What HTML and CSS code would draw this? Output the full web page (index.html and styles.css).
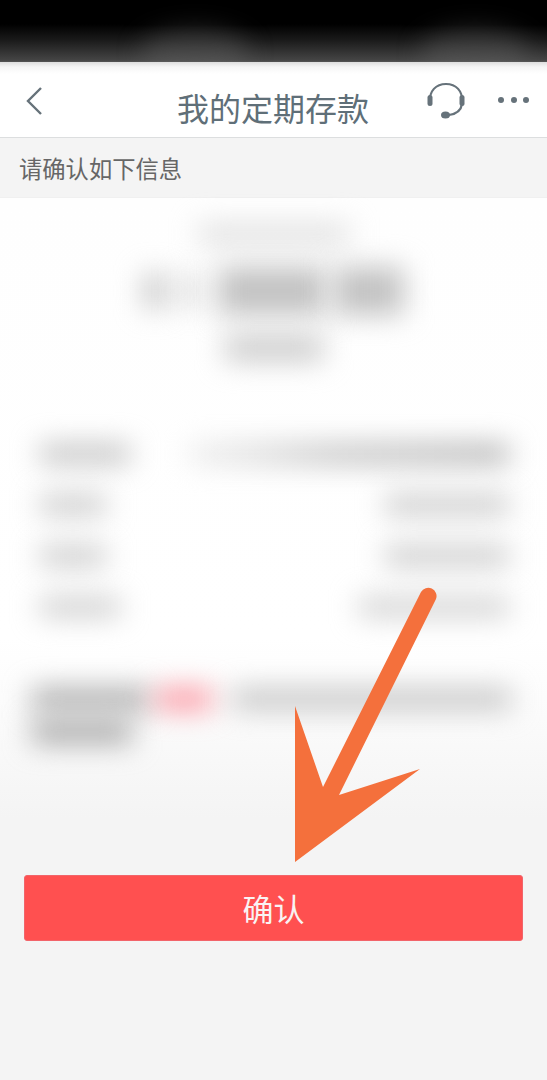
FILE: index.html
```html
<!DOCTYPE html>
<html lang="zh-CN">
<head>
<meta charset="utf-8">
<title>我的定期存款</title>
<link rel="stylesheet" href="styles.css">
</head>
<body>
<div class="phone">
  <div class="status"><span class="glow glow-a"></span><span class="glow glow-b"></span></div>
  <header class="nav">
    <div class="nav-left">
      <svg class="back" viewBox="0 0 18 30" aria-hidden="true"><path d="M16 2 3 15l13 13" /></svg>
    </div>
    <h1 class="title">我的定期存款</h1>
    <div class="nav-right">
      <svg class="headset" viewBox="0 0 38 38" aria-hidden="true">
        <path class="hs-line" d="M3 20C2 9 9 2 19 2s17 7 16 18" />
        <path class="hs-line" d="M35 22c-1 7-6 10-13 11" />
        <rect class="hs-fill" x="0.500" y="13" width="5" height="11" rx="2.500" />
        <rect class="hs-fill" x="32.500" y="13" width="5" height="11" rx="2.500" />
        <ellipse class="hs-fill" cx="18.500" cy="33" rx="4.500" ry="3.500" />
      </svg>
      <div class="dots"><i></i><i></i><i></i></div>
    </div>
  </header>
  <div class="hint">请确认如下信息</div>
  <main class="card">
    <section class="summary">
      <div class="blur b-caption"></div>
      <div class="amount">
        <div class="blur b-cur1"></div>
        <div class="blur b-cur2"></div>
        <div class="blur b-num1"></div>
        <div class="blur b-num2"></div>
      </div>
      <div class="blur b-sub"></div>
    </section>
    <section class="rows">
      <div class="row"><div class="blur b-l1"></div><div class="blur b-v1"></div></div>
      <div class="row"><div class="blur b-l2"></div><div class="blur b-v2"></div></div>
      <div class="row"><div class="blur b-l2"></div><div class="blur b-v2"></div></div>
      <div class="row"><div class="blur b-l3"></div><div class="blur b-v3"></div></div>
    </section>
    <section class="note">
      <div class="note-line">
        <div class="blur n-a"></div>
        <div class="blur n-pink"></div>
        <div class="blur n-b"></div>
      </div>
      <div class="blur n-c"></div>
    </section>
  </main>
  <div class="action"><button class="confirm" type="button">确认</button></div>
  <svg class="arrow" viewBox="0 0 547 1080" aria-hidden="true">
    <path d="M295 706 323 787 421 592A8.300 8.300 0 0 1 436 599L339 795 420 769 295 862Z" />
  </svg>
</div>
</body>
</html>
```
FILE: styles.css
```css
* { box-sizing: border-box; }
html, body { margin: 0; padding: 0; }
body {
  background: #f4f4f4;
  font-family: "Noto Sans CJK SC", "Noto Sans", sans-serif;
}
.phone {
  position: relative;
  width: 547px;
  height: 1080px;
  overflow: hidden;
  background: #f4f4f4;
}
.status {
  position: relative;
  height: 62px;
  overflow: hidden;
  background: linear-gradient(#000 0, #000 24px, #1a1a1a 40px, #444 60px, #555 62px);
}
.glow {
  position: absolute;
  bottom: -14px;
  height: 48px;
  border-radius: 50%;
  background: rgba(110, 110, 110, .35);
  filter: blur(12px);
}
.glow-a { left: 140px; width: 110px; }
.glow-b { left: 420px; width: 110px; }
.nav {
  display: grid;
  grid-template-columns: 1fr auto 1fr;
  align-items: center;
  height: 76px;
  padding: 0 18px 0 25px;
  background: linear-gradient(#dedede 0, #f6f6f6 5px, #fff 12px);
  border-bottom: 1px solid #dcdedf;
}
.nav-left { display: flex; }
.back {
  width: 18px;
  height: 30px;
  margin-top: 2px;
}
.back path {
  fill: none;
  stroke: #66727a;
  stroke-width: 2.400;
}
.title {
  margin: 14px 0 0;
  font-size: 32px;
  line-height: 44px;
  font-weight: 400;
  color: #5f6f78;
  white-space: nowrap;
  transform: translateX(-4px);
}
.nav-right {
  display: flex;
  justify-content: flex-end;
  align-items: center;
  gap: 33px;
  margin-top: 1px;
}
.headset { width: 38px; height: 38px; margin-top: 2px; }
.hs-line { fill: none; stroke: #66727a; stroke-width: 2.200; }
.hs-fill { fill: #66727a; }
.dots { display: flex; gap: 6.500px; }
.dots i {
  width: 6px;
  height: 6px;
  border-radius: 50%;
  background: #66727a;
}
.hint {
  height: 60px;
  padding-left: 19px;
  font-size: 23.300px;
  line-height: 60px;
  color: #666;
  background: #f4f4f4;
  border-bottom: 1px solid #f0f0f0;
}
.card {
  height: 677px;
  padding-top: 27px;
  background: linear-gradient(#fefefe 0, #fff 440px, #fbfbfb 520px, #f4f4f4 620px);
}
.blur { background: #bbb; filter: blur(14px); }
.summary {
  display: flex;
  flex-direction: column;
  align-items: center;
}
.b-caption {
  width: 150px;
  height: 18px;
  background: #dcdcdc;
}
.amount {
  display: flex;
  align-items: center;
  margin-top: 22px;
  height: 52px;
}
.b-cur1 { width: 22px; height: 34px; margin-right: 16px; background: #c4c4c4; }
.b-cur2 { width: 14px; height: 34px; margin-right: 22px; background: #d0d0d0; }
.b-num1 { width: 108px; height: 48px; margin-right: 8px; background: #c2c2c2; }
.b-num2 { width: 70px; height: 48px; background: #c2c2c2; }
.b-sub {
  width: 98px;
  height: 26px;
  margin-top: 18px;
  background: #cacaca;
}
.rows {
  display: flex;
  flex-direction: column;
  gap: 35px;
  margin-top: 85px;
  padding: 0 38px 0 40px;
}
.row {
  display: flex;
  justify-content: space-between;
  align-items: center;
  height: 16px;
}
.b-l1 { width: 90px; height: 18px; background: #bcbcbc; }
.b-v1 {
  width: 320px;
  height: 18px;
  background: linear-gradient(90deg, #ececec 0, #d8d8d8 20%, #bcbcbc 45%, #a8a8a8 100%);
}
.b-l2 { width: 66px; height: 18px; background: #c4c4c4; }
.b-v2 { width: 124px; height: 18px; background: #c4c4c4; }
.b-l3 { width: 80px; height: 18px; background: #c8c8c8; }
.b-v3 { width: 150px; height: 18px; background: #cccccc; }
.note {
  margin-top: 76px;
  padding: 0 36px 0 32px;
}
.note-line {
  display: flex;
  align-items: center;
  gap: 20px;
  height: 16px;
}
.n-a { width: 118px; height: 20px; background: #a4a4a4; }
.n-pink { width: 56px; height: 20px; margin-left: -14px; background: #fb8e9a; }
.n-b { flex: 1; height: 18px; background: #bcbcbc; }
.n-c {
  width: 100px;
  height: 22px;
  margin-top: 14px;
  background: #a4a4a4;
}
.action { padding: 0 24px; }
.confirm {
  display: block;
  width: 100%;
  height: 66px;
  padding: 0 0 1px;
  border: 1px solid #f2646a;
  border-radius: 3px;
  background: #ff5050;
  color: #f9f3f3;
  font: 400 31px/64px "Noto Sans CJK SC", "Noto Sans", sans-serif;
}
.arrow {
  position: absolute;
  inset: 0;
  width: 547px;
  height: 1080px;
}
.arrow path { fill: #f4703c; }
```
